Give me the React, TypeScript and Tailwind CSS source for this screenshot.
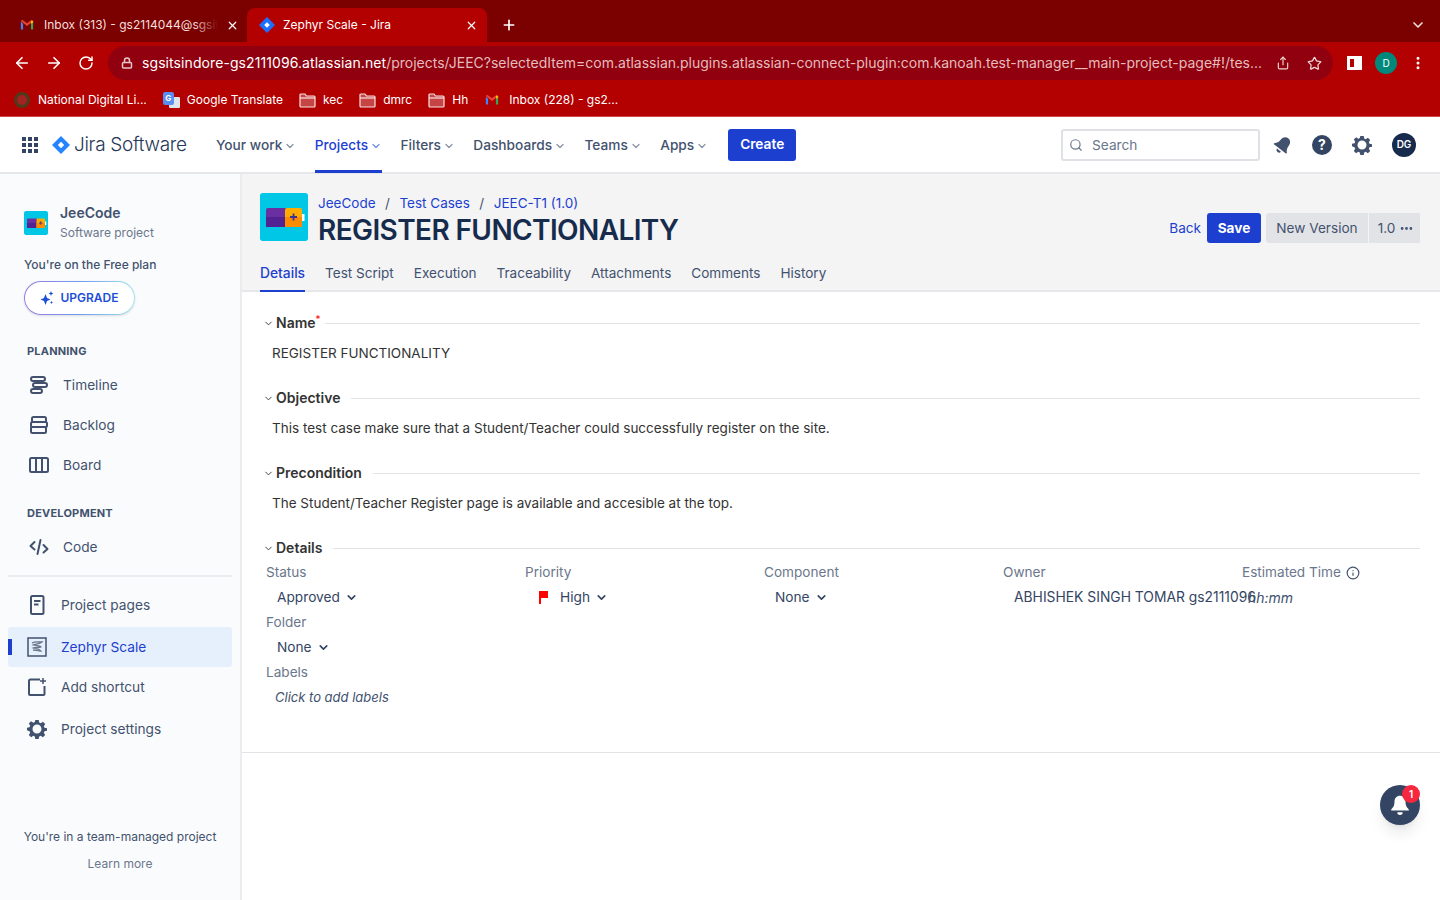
import { ChevronDown, ArrowLeft, ArrowRight, RotateCw, Lock, Star, Share, X, Plus, Search, Info, MoreVertical, MoreHorizontal } from "lucide-react";

const GmailIcon = ({ size = 14 }: { size?: number }) => (
  <svg width={size} height={size} viewBox="0 0 16 16">
    <path d="M1 4v9h2.5V6.5z" fill="#4285f4" />
    <path d="M12.5 6.5V13H15V4z" fill="#34a853" />
    <path d="M1 3.5 8 9l7-5.5L13.5 2 8 6 2.5 2z" fill="#ea4335" />
    <path d="M12.5 3.2 15 3.5V5l-2.5 1.8z" fill="#fbbc04" />
  </svg>
);

const JiraDiamond = ({ size = 16, color = "#2684ff" }: { size?: number; color?: string }) => (
  <svg width={size} height={size} viewBox="0 0 20 20">
    <path d="M10 0 20 10 10 20 0 10z" fill={color} />
    <path d="M10 6.5 13.5 10 10 13.5 6.5 10z" fill="#fff" />
  </svg>
);

const FolderIcon = () => (
  <svg width="17" height="15" viewBox="0 0 17 15" fill="#ffffff44" stroke="#f6e3e3" strokeWidth="1.2">
    <path d="M1 3V2a1 1 0 0 1 1-1h4l1.500 2H15a1 1 0 0 1 1 1v9a1 1 0 0 1-1 1H2a1 1 0 0 1-1-1z" />
    <path d="M1 5h15" />
  </svg>
);

const ProjectIcon = ({ size }: { size: number }) => (
  <svg width={size} height={size} viewBox="0 0 48 48" className="shrink-0 rounded-[2px]">
    <rect width="48" height="48" rx="2" fill="#00c7e6" />
    <rect x="42" y="21" width="2.5" height="7" fill="#fff" />
    <rect x="6" y="15" width="21" height="19" rx="2" fill="#6a2fa0" />
    <rect x="6" y="24" width="21" height="10" fill="#532292" />
    <rect x="25" y="15" width="17" height="19" rx="2" fill="#ffab00" />
    <rect x="25" y="24" width="17" height="10" fill="#ff8b00" />
    <path d="M33.500 20.500v7M30 24h7" stroke="#403294" strokeWidth="1.8" />
  </svg>
);

const TimelineIcon = () => (
  <svg width="20" height="20" viewBox="0 0 20 20" fill="none" stroke="#42526e" strokeWidth="2">
    <rect x="2" y="2" width="14" height="4" rx="2" />
    <rect x="4" y="8" width="14" height="4" rx="2" />
    <rect x="2" y="14" width="11" height="4" rx="2" />
  </svg>
);

const BacklogIcon = () => (
  <svg width="20" height="20" viewBox="0 0 20 20" fill="none" stroke="#42526e" strokeWidth="2">
    <rect x="3" y="2" width="14" height="5" rx="1.500" />
    <rect x="2" y="7" width="16" height="5" rx="1.500" />
    <rect x="2" y="12" width="15" height="6" rx="1.500" />
  </svg>
);

const BoardIcon = () => (
  <svg width="20" height="20" viewBox="0 0 20 20" fill="none" stroke="#42526e" strokeWidth="2">
    <rect x="1" y="3" width="18" height="14" rx="1.500" />
    <path d="M7 3v14M13 3v14" />
  </svg>
);

const CodeIcon = () => (
  <svg width="20" height="20" viewBox="0 0 20 20" fill="none" stroke="#42526e" strokeWidth="2" strokeLinecap="round" strokeLinejoin="round">
    <path d="M5.500 5 1.500 9 5.500 12.500M14.500 8 18.500 12 14.500 15.500M11.500 3 8.500 17" />
  </svg>
);

const PagesIcon = () => (
  <svg width="20" height="20" viewBox="0 0 20 20" fill="none">
    <rect x="4" y="1" width="12.500" height="18" rx="1.500" stroke="#42526e" strokeWidth="2" />
    <path d="M7 6h6.500M7 9.500h4.500" stroke="#42526e" strokeWidth="2" />
  </svg>
);

const ZephyrIcon = () => (
  <svg width="20" height="20" viewBox="0 0 20 20" fill="none">
    <rect x="1" y="1" width="18" height="18" stroke="#42526e" strokeWidth="1.500" />
    <path d="M5 6c3-2 7-1 10-1-2 2-7 2-9 3 3 1 7 0 8 2-2 1-6 0-8 1 3 1 6 0 8 3-3 0-6-1-8-1" stroke="#6b778c" strokeWidth="1.300" />
  </svg>
);

const ShortcutIcon = () => (
  <svg width="20" height="20" viewBox="0 0 20 20" fill="none" stroke="#42526e" strokeWidth="2">
    <path d="M13 2.500H3.500a1.500 1.500 0 0 0-1.500 1.500v13a1 1 0 0 0 1 1h13.500a1 1 0 0 0 1-1V9" />
    <path d="M16 1v6M13 4h6" strokeWidth="1.500" />
  </svg>
);

const GearIcon = ({ color = "#42526e" }: { color?: string }) => (
  <svg width="20" height="20" viewBox="0 0 20 20">
    <path
      fill={color}
      fillRule="evenodd"
      d="M8.300 1h3.400l.5 2.500 1.500.7 2.200-1.400 2.300 2.300-1.400 2.200.7 1.500 2.500.5v2.400l-2.500.5-.7 1.500 1.400 2.200-2.300 2.300-2.200-1.400-1.500.7-.5 2.500H8.300l-.5-2.500-1.500-.7-2.200 1.400-2.300-2.300 1.400-2.200-.7-1.500L0 11.200V8.800l2.500-.5.7-1.500-1.400-2.200 2.300-2.300 2.200 1.400 1.500-.7zM10 5.500a4.500 4.500 0 1 0 0 9 4.500 4.500 0 0 0 0-9z"
    />
  </svg>
);

const BellSolid = ({ size = 18, color = "#42526e" }: { size?: number; color?: string }) => (
  <svg width={size} height={size} viewBox="0 0 20 20">
    <path fill={color} d="M10 1.500c-3 0-5 2.300-5 5.500 0 3.500-1 5-3 7v1h16v-1c-2-2-3-3.500-3-7 0-3.200-2-5.500-5-5.500z" />
    <path fill={color} d="M7.500 16.500h5a2.500 2.500 0 0 1-5 0z" />
  </svg>
);

const navItems = [
  { label: "Your work", active: false },
  { label: "Projects", active: true },
  { label: "Filters", active: false },
  { label: "Dashboards", active: false },
  { label: "Teams", active: false },
  { label: "Apps", active: false },
];

const tabs = ["Details", "Test Script", "Execution", "Traceability", "Attachments", "Comments", "History"];

const SideItem = ({ icon, label, pad }: { icon: React.ReactNode; label: string; pad: string }) => (
  <div className={`flex h-10 items-center gap-[14px] text-[13.7px] text-[#42526e] ${pad}`}>
    <span className="flex w-5 justify-center">{icon}</span>
    {label}
  </div>
);

const SectionHead = ({ title, required }: { title: string; required?: boolean }) => (
  <div className="flex h-[20px] items-center pl-[21px] pr-5">
    <ChevronDown size={11} strokeWidth={2} className="mr-[2px] text-[#333]" />
    <span className="text-sm font-semibold text-[#333]">{title}</span>
    {required && <span className="-mr-[7px] mb-2 text-[10px] leading-none text-[#ff0000]">*</span>}
    <div className="ml-[11px] h-px flex-1 bg-[#e2e3e6]" />
  </div>
);

const Section = ({ title, required, text }: { title: string; required?: boolean; text: string }) => (
  <section className="h-[75px]">
    <SectionHead title={title} required={required} />
    <p className="pl-[30px] pt-[10px] text-[13.5px] leading-5 text-[#333]">{text}</p>
  </section>
);

const Field = ({ label, value, icon, w, valueSize = "text-[13.7px]" }: { label: string; value: string; icon?: React.ReactNode; w: string; valueSize?: string }) => (
  <div className={w}>
    <div className="flex h-[25px] items-center text-[13.6px] text-[#6b778c]">{label}</div>
    <div className={`flex h-[25px] items-center whitespace-nowrap pl-[11px] text-[#344563] ${valueSize}`}>
      {icon}
      {value}
      <ChevronDown size={13} strokeWidth={3} className="ml-[5px] text-[#344563]" />
    </div>
  </div>
);

export default function App() {
  return (
    <div
      className="relative flex h-screen flex-col overflow-hidden bg-white"
      style={{ fontFamily: "Inter, 'Noto Sans', sans-serif" }}
    >
      {/* browser tabs */}
      <div className="flex h-[42px] shrink-0 items-end bg-[#7b0000] pl-[8px] pr-[14px]">
        <div className="flex h-[34px] w-[239px] items-center pl-[12px] text-xs text-[#f3dede]">
          <GmailIcon />
          <span className="relative ml-[10px] w-[174px] overflow-hidden whitespace-nowrap">
            Inbox (313) - gs2114044@sgsit
            <span className="absolute inset-y-0 right-0 w-6 bg-gradient-to-r from-transparent to-[#7b0000]" />
          </span>
          <X size={13} strokeWidth={2.2} className="ml-[8px] text-white" />
        </div>
        <div className="flex h-[34px] w-[240px] items-center rounded-t-lg bg-[#b30000] pl-[12px] text-xs text-white">
          <JiraDiamond size={16} color="#1f6fff" />
          <span className="ml-[8px] flex-1">Zephyr Scale - Jira</span>
          <X size={13} strokeWidth={2.2} className="mr-[9px]" />
        </div>
        <div className="ml-[14px] flex h-[34px] items-center">
          <Plus size={16} strokeWidth={2.5} className="text-white" />
        </div>
        <div className="ml-auto flex h-[34px] items-center">
          <ChevronDown size={16} strokeWidth={2.5} className="text-[#f3dede]" />
        </div>
      </div>

      {/* toolbar */}
      <div className="flex h-[42px] shrink-0 items-center bg-[#b30000] pl-[13px] pr-[14px]">
        <ArrowLeft size={18} strokeWidth={2.2} className="text-white" />
        <ArrowRight size={18} strokeWidth={2.2} className="ml-[14px] text-white" />
        <RotateCw size={16} strokeWidth={2.2} className="ml-[15px] text-white" />
        <div className="ml-[14px] flex h-[34px] w-[1225px] items-center rounded-full bg-[#90000f] pl-[13px] pr-[11px]">
          <Lock size={12} strokeWidth={3} className="shrink-0 text-[#e8c6c6]" />
          <span className="ml-[9px] min-w-0 flex-1 whitespace-nowrap text-sm leading-5 text-[#e5bcbc]">
            <span className="tracking-[0.08px] text-white">sgsitsindore-gs2111096.atlassian.net</span>
            /projects/JEEC?selectedItem=com.atlassian.plugins.atlassian-connect-plugin:com.kanoah.test-manager__main-project-page#!/tes...
          </span>
          <Share size={14} className="ml-[18px] shrink-0 text-[#f0d5d5]" />
          <Star size={15} className="ml-[17px] shrink-0 text-[#f0d5d5]" />
        </div>
        <div className="ml-[14px] flex h-[14px] w-[15px] justify-end border-[3px] border-white border-r-[8px]" />
        <div className="ml-[13px] flex h-[22px] w-[22px] items-center justify-center rounded-full bg-[#00897b] text-[10px] text-white">D</div>
        <MoreVertical size={16} strokeWidth={2.5} className="ml-[13px] text-white" />
      </div>

      {/* bookmarks */}
      <div className="flex h-[33px] shrink-0 items-center border-b border-[#d14a4a] bg-[#b30000] pl-[14px] text-xs text-white">
        <span className="h-4 w-4 rounded-full border-[3px] border-[#4f3a1c] bg-[#a32222]" />
        <span className="ml-[8px]">National Digital Li...</span>
        <span className="relative ml-[16px] h-[16px] w-[17px]">
          <span className="absolute bottom-0 right-0 h-[11px] w-[11px] rounded-[1px] bg-[#dfe3ea]" />
          <span className="absolute left-0 top-0 flex h-[13px] w-[11px] items-center justify-center rounded-[2px] bg-[#5a8df0] text-[8px] font-bold">G</span>
        </span>
        <span className="ml-[7px]">Google Translate</span>
        <span className="ml-[16px] flex"><FolderIcon /></span>
        <span className="ml-[7px]">kec</span>
        <span className="ml-[16px] flex"><FolderIcon /></span>
        <span className="ml-[7px]">dmrc</span>
        <span className="ml-[16px] flex"><FolderIcon /></span>
        <span className="ml-[7px]">Hh</span>
        <span className="ml-[17px]"><GmailIcon /></span>
        <span className="ml-[10px]">Inbox (228) - gs2...</span>
      </div>

      {/* jira nav */}
      <header className="flex h-[57px] shrink-0 items-center border-b-2 border-[#e6e7ea] bg-white pl-[22px] pr-[24px]">
        <div className="grid w-4 grid-cols-3 gap-[2px]">
          {Array.from({ length: 9 }).map((_, i) => (
            <span key={i} className="h-[4px] w-[4px] bg-[#344563]" />
          ))}
        </div>
        <span className="ml-[14px]"><JiraDiamond size={18} color="#2684ff" /></span>
        <span className="ml-[4px] w-[119px] pt-[2px] text-[19px] font-light tracking-[-0.3px] text-[#253858]">Jira Software</span>
        <nav className="ml-[23px] flex h-[56px] gap-[18.4px] self-start">
          {navItems.map((item) => (
            <div
              key={item.label}
              className={`flex h-full items-center border-b-[3px] pt-1 text-[13.7px] font-medium ${item.active ? "border-[#1d3fcf] text-[#1d3fcf]" : "border-transparent text-[#42526e]"}`}
            >
              {item.label}
              <ChevronDown size={12} strokeWidth={2.5} className={`ml-[2px] ${item.active ? "text-[#6f8fe0]" : "text-[#8993a4]"}`} />
            </div>
          ))}
        </nav>
        <button className="ml-[20px] h-8 w-[68px] rounded-[3px] bg-[#1d3fcf] text-[13.7px] font-semibold text-white">Create</button>
        <div className="ml-auto flex h-8 w-[199px] items-center rounded-[3px] border-2 border-[#dfe1e6] bg-white pl-[6px]">
          <Search size={14} className="text-[#6b778c]" />
          <span className="ml-[9px] pt-px text-[13.7px] text-[#6b778c]">Search</span>
        </div>
        <span className="ml-[13px] rotate-[38deg]"><BellSolid size={20} /></span>
        <span className="ml-[19px] flex h-5 w-5 items-center justify-center rounded-full bg-[#344563] text-sm font-bold text-white">?</span>
        <span className="ml-[20px]"><GearIcon /></span>
        <span className="ml-[20px] flex h-6 w-6 items-center justify-center rounded-full bg-[#172b4d] text-[10px] font-semibold text-white">DG</span>
      </header>

      <div className="flex min-h-0 flex-1">
        {/* sidebar */}
        <aside className="flex w-[242px] shrink-0 flex-col border-r-2 border-[#ebecf0] bg-[#fafbfc] pr-[8px]">
          <div className="flex items-center pl-[24px] pt-[29px]">
            <ProjectIcon size={24} />
            <div className="ml-[12px]">
              <div className="text-sm font-semibold leading-5 text-[#42526e]">JeeCode</div>
              <div className="text-xs leading-5 text-[#6b778c]">Software project</div>
            </div>
          </div>
          <div className="pl-[24px] pt-[14px] text-xs font-medium leading-4 text-[#42526e]">You're on the Free plan</div>
          <div className="ml-[24px] mt-[8px] h-[34px] w-[111px] rounded-full bg-gradient-to-r from-[#9a7be0] via-[#6f9bf0] to-[#a5e3ea] p-px shadow-sm">
            <div className="flex h-full items-center justify-center gap-[6px] rounded-full bg-white text-xs font-semibold text-[#1d4ed8]">
              <svg width="14" height="14" viewBox="0 0 14 14" fill="#1d4ed8">
                <path d="M5.500 3 7 7l3.500 1.500L7 10l-1.500 4L4 10 .5 8.500 4 7z" />
                <path d="M11 0l.7 1.800 1.800.7-1.800.7L11 5l-.7-1.800-1.800-.7 1.800-.7zM11.500 10l.5 1 1 .5-1 .5-.5 1-.5-1-1-.5 1-.5z" />
              </svg>
              UPGRADE
            </div>
          </div>

          <div className="pl-[27px] pt-[28px] text-[11px] font-bold leading-4 tracking-[0.2px] text-[#42526e]">PLANNING</div>
          <div className="pt-[6px]">
            <SideItem icon={<TimelineIcon />} label="Timeline" pad="pl-[29px]" />
            <SideItem icon={<BacklogIcon />} label="Backlog" pad="pl-[29px]" />
            <SideItem icon={<BoardIcon />} label="Board" pad="pl-[29px]" />
          </div>
          <div className="pl-[27px] pt-[20px] text-[11px] font-bold leading-4 tracking-[0.2px] text-[#42526e]">DEVELOPMENT</div>
          <div className="pt-[6px]">
            <SideItem icon={<CodeIcon />} label="Code" pad="pl-[29px]" />
          </div>
          <div className="ml-[8px] mt-[8px] h-[2px] bg-[#ebecf0]" />
          <div className="pt-[8px]">
            <SideItem icon={<PagesIcon />} label="Project pages" pad="pl-[27px]" />
            <div className="relative ml-[8px] mt-[2px] flex h-10 items-center gap-[14px] rounded-[3px] bg-[#e6effc] pl-[19px] text-[13.7px] text-[#1d3fcf]">
              <span className="absolute left-0 top-[12px] h-4 w-1 bg-[#1d3fcf]" />
              <ZephyrIcon />
              Zephyr Scale
            </div>
            <SideItem icon={<ShortcutIcon />} label="Add shortcut" pad="pl-[27px]" />
            <div className="pt-[2px]">
              <SideItem icon={<GearIcon />} label="Project settings" pad="pl-[27px]" />
            </div>
          </div>
          <div className="mt-auto pb-[28px] pl-[8px] text-center text-xs text-[#6b778c]">
            <div className="text-[#42526e]">You're in a team-managed project</div>
            <div className="pt-[11px] font-normal">Learn more</div>
          </div>
        </aside>

        {/* main */}
        <main className="min-w-0 flex-1">
          <div className="h-[118px] border-b-2 border-[#e6e7ea] bg-[#f4f4f5] pl-[18px] pr-5">
            <div className="flex h-[78px] items-start pt-[19px]">
              <ProjectIcon size={48} />
              <div className="ml-[10px] min-w-0">
                <div className="flex h-5 items-center text-[13.5px] text-[#1d3fcf]">
                  <span>JeeCode</span>
                  <span className="mx-[9.5px] text-[#42526e]">/</span>
                  <span>Test Cases</span>
                  <span className="mx-[9.5px] text-[#42526e]">/</span>
                  <span>JEEC-T1 (1.0)</span>
                </div>
                <h1 className="text-[28px] font-semibold leading-[34px] tracking-[-0.6px] text-[#172b4d]">REGISTER FUNCTIONALITY</h1>
              </div>
              <div className="ml-auto flex items-center pt-[20px] text-[13.6px]">
                <span className="text-[#1d3fcf]">Back</span>
                <button className="ml-[6px] h-[30px] w-[54px] rounded-[3px] bg-[#1d3fcf] font-bold text-white">Save</button>
                <button className="ml-[5px] h-[30px] w-[102px] rounded-l-[3px] bg-[#e2e3e7] text-[#42526e]">New Version</button>
                <span className="ml-px flex h-[30px] w-[51px] items-center justify-center gap-[4px] bg-[#e2e3e7] pl-[3px] text-[#42526e]">
                  1.0 <MoreHorizontal size={15} strokeWidth={2.5} />
                </span>
              </div>
            </div>
            <div className="flex h-[38px] gap-5">
              {tabs.map((tab, i) => (
                <div
                  key={tab}
                  className={`flex h-[40px] items-center border-b-2 pt-1 ${i === 0 ? "border-[#1d3fcf] text-[13.8px] font-medium text-[#1d3fcf]" : "border-transparent text-[13.55px] text-[#42526e]"}`}
                >
                  {tab}
                </div>
              ))}
            </div>
          </div>

          <div className="h-[461px] border-b border-[#e2e3e6] pt-[21px]">
            <Section title="Name" required text="REGISTER FUNCTIONALITY" />
            <Section title="Objective" text="This test case make sure that a Student/Teacher could successfully register on the site." />
            <Section title="Precondition" text="The Student/Teacher Register page is available and accesible at the top." />
            <SectionHead title="Details" />
            <div className="pl-[24px] pt-[2px]">
              <div className="flex">
                <Field label="Status" value="Approved" w="w-[259px]" />
                <Field
                  label="Priority"
                  value="High"
                  w="w-[239px]"
                  icon={
                    <svg width="12" height="14" viewBox="0 0 12 14" className="mb-[2px] ml-[2px] mr-[10px]">
                      <path d="M1 1h9v7H3v6H1z" fill="#ff0000" />
                    </svg>
                  }
                />
                <Field label="Component" value="None" w="w-[239px]" />
                <Field label="Owner" value="ABHISHEK SINGH TOMAR gs2111096" w="w-[239px]" valueSize="text-[13.85px]" />
                <div>
                  <div className="flex h-[25px] items-center gap-[5px] text-[13.6px] text-[#6b778c]">
                    Estimated Time
                    <Info size={14} className="text-[#42526e]" />
                  </div>
                  <div className="flex h-[25px] items-center pl-[6px] text-sm italic text-[#42526e]">hh:mm</div>
                </div>
              </div>
              <Field label="Folder" value="None" w="w-[259px]" />
              <div className="flex h-[25px] items-center text-[13.6px] text-[#6b778c]">Labels</div>
              <div className="flex h-[25px] items-center pl-[9px] text-[13px] italic text-[#42526e]">Click to add labels</div>
            </div>
          </div>
        </main>
      </div>

      {/* help widget */}
      <div className="absolute left-[1380px] top-[785px] flex h-10 w-10 items-center justify-center rounded-full bg-[#344563] shadow-lg">
        <BellSolid size={22} color="#fff" />
        <span className="absolute right-0 top-0 flex h-[18px] w-[18px] items-center justify-center rounded-full bg-[#f5283f] text-[10px] font-semibold text-white">1</span>
      </div>
    </div>
  );
}
